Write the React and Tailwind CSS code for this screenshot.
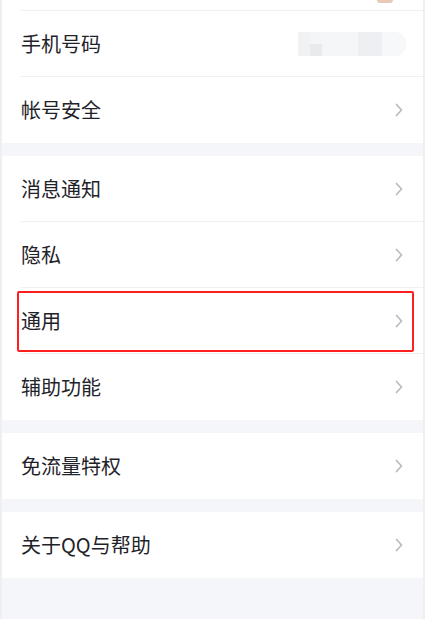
import React from "react";

const font = { fontFamily: '"Noto Sans CJK SC", "Noto Sans", sans-serif' };

function Chevron() {
  return (
    <svg width="10" height="16" viewBox="0 0 10 16" className="shrink-0">
      <path d="M2.5 2.5 L7.5 8 L2.5 13.5" fill="none" stroke="#b7bbc3" strokeWidth="1.7" strokeLinecap="round" strokeLinejoin="round" />
    </svg>
  );
}

function Row({ label, last, right, highlight }) {
  return (
    <div className="relative pl-[19px]">
      <div className={`h-[66px] flex items-center pr-[19px] border-b ${last ? "border-transparent" : "border-[#eef0f4]"}`}>
        <span className="flex-1 text-[20px] text-[#1f2329] leading-none">{label}</span>
        {right ?? <Chevron />}
      </div>
      {highlight && (
        <div className="absolute left-[15px] right-[9px] top-[3px] bottom-[2px] border-[2px] border-[#ff1f1f] rounded-[2px]" />
      )}
    </div>
  );
}

function Blurred() {
  return (
    <div className="flex h-[24px] w-[108px] rounded-r-full overflow-hidden bg-[#f3f4f6] mr-[-2px]">
      <div className="w-[12px] bg-[#f1f2f4]" />
      <div className="w-[12px] flex flex-col">
        <div className="h-[12px] bg-[#f4f5f7]" />
        <div className="h-[12px] bg-[#e9eaed]" />
      </div>
      <div className="w-[36px] bg-[#f5f6f8]" />
      <div className="w-[24px] bg-[#eeeff2]" />
      <div className="flex-1 bg-[#f7f8fa]" />
    </div>
  );
}

function Section({ children }) {
  return <div className="bg-white">{children}</div>;
}

export default function App() {
  return (
    <div style={font} className="w-[425px] h-[619px] overflow-hidden bg-[#f5f6fa] border-l-[2px] border-r-[2px] border-[#efefef]">
      <Section>
        <div className="pl-[19px]">
          <div className="h-[11px] border-b border-[#eef0f4] relative">
            <div className="absolute right-[30px] top-0 w-[16px] h-[3px] bg-[#e8c9b8] rounded-b-full" />
          </div>
        </div>
        <Row label="手机号码" right={<Blurred />} />
        <Row label="帐号安全" last />
      </Section>
      <div className="h-[13px]" />
      <Section>
        <Row label="消息通知" />
        <Row label="隐私" />
        <Row label="通用" highlight />
        <Row label="辅助功能" last />
      </Section>
      <div className="h-[13px]" />
      <Section>
        <Row label="免流量特权" last />
      </Section>
      <div className="h-[13px]" />
      <Section>
        <Row label="关于QQ与帮助" last />
      </Section>
    </div>
  );
}
